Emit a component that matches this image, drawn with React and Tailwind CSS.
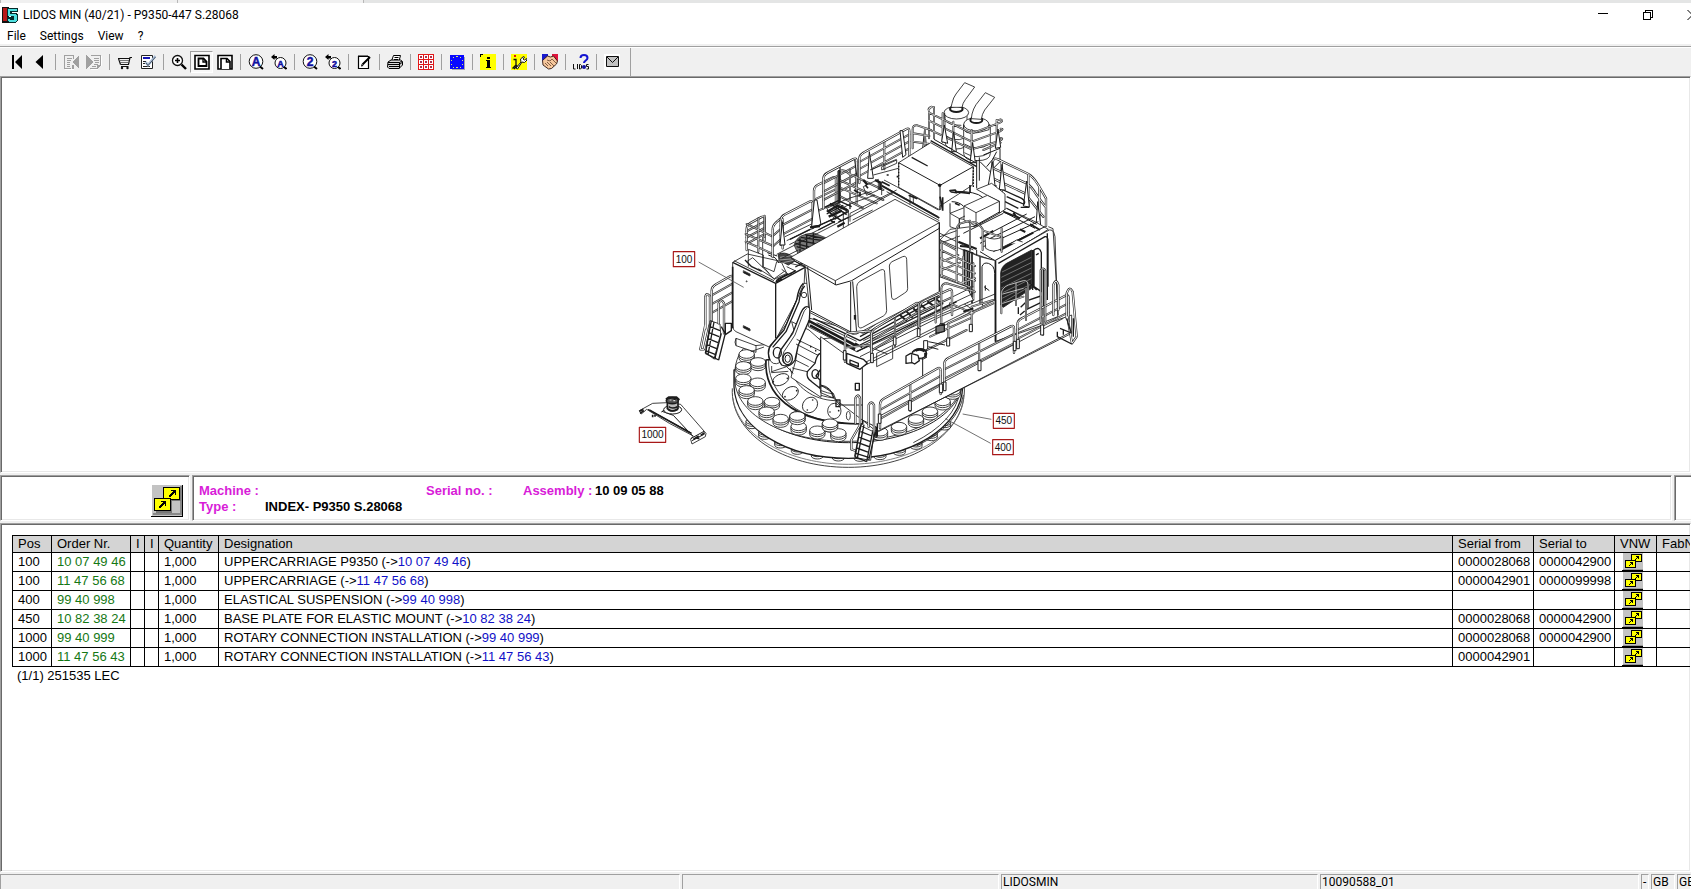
import React from 'react';

const ROWS = [
    { pos: '100', order: '10 07 49 46', qty: '1,000', name: 'UPPERCARRIAGE P9350', from: '0000028068', to: '0000042900' },
    { pos: '100', order: '11 47 56 68', qty: '1,000', name: 'UPPERCARRIAGE', from: '0000042901', to: '0000099998' },
    { pos: '400', order: '99 40 998', qty: '1,000', name: 'ELASTICAL SUSPENSION', from: '', to: '' },
    { pos: '450', order: '10 82 38 24', qty: '1,000', name: 'BASE PLATE FOR ELASTIC MOUNT', from: '0000028068', to: '0000042900' },
    { pos: '1000', order: '99 40 999', qty: '1,000', name: 'ROTARY CONNECTION INSTALLATION', from: '0000028068', to: '0000042900' },
    { pos: '1000', order: '11 47 56 43', qty: '1,000', name: 'ROTARY CONNECTION INSTALLATION', from: '0000042901', to: '' },
];

const FRAME = 'border border-t-[#a0a0a0] border-l-[#a0a0a0] border-r-white border-b-white bg-white shadow-[inset_1px_1px_0_#696969,inset_-1px_-1px_0_#e8e8e8]';

/* ---------- toolbar icons, all on a 16 x 16 grid ---------- */

function Icon({ children, crisp = true }) {
    return (
        <svg width="16" height="16" viewBox="0 0 16 16" fill="none" stroke="none" shapeRendering={crisp ? 'crispEdges' : 'auto'} aria-hidden="true">
            {children}
        </svg>
    );
}

const FirstIcon = () => (
    <Icon crisp={false}>
        <path d="M3 1h2v14H3zM13 1v14L6 8z" fill="#000" />
    </Icon>
);

const PrevIcon = () => (
    <Icon crisp={false}>
        <path d="M11 1v14L3.500 8z" fill="#000" />
    </Icon>
);

const SheetPrevIcon = () => (
    <Icon>
        <path d="M1 1h10v1H2v12h6v1H1zM4 4h5v1H4zM4 6h4v1H4zM4 8h3v1H4zM4 10h3v1H4zM4 12h3v1H4z" fill="#a0a0a0" />
        <path d="M16 1v14l-7-7zM10 2h1v3h-1zM9 11h2v4H9z" fill="#a0a0a0" />
        <path d="M2 15h9v1H2z" fill="#fff" />
    </Icon>
);

const SheetNextIcon = () => (
    <Icon>
        <path d="M0 1l7 7-7 7zM5 1h10v10h-1V2H5zM4 14h7v1H4zM11 11h4v1h-1v1h-1v1h-1v1h-1z" fill="#a0a0a0" />
        <path d="M8 4h5v1H8zM8 6h5v1H8zM9 8h4v1H9zM8 10h4v1H8zM6 12h4v1H6z" fill="#a0a0a0" />
        <path d="M15 2h1v10h-1zM5 15h7v1H5z" fill="#fff" />
    </Icon>
);

const CartIcon = () => (
    <Icon crisp={false}>
        <path d="M1 4.500h11.500M15 3.500h-2L11.500 10.500H3.500M1.500 4.500l2 6" stroke="#111" strokeWidth="1.200" />
        <path d="M2 6.500h10M3 8.500h9" stroke="#555" strokeWidth="0.800" />
        <path d="M4 12.500h7.500" stroke="#111" />
        <circle cx="5" cy="14" r="1.200" fill="#111" />
        <circle cx="10.500" cy="14" r="1.200" fill="#111" />
    </Icon>
);

const ChecklistIcon = () => (
    <Icon crisp={false}>
        <path d="M1.500 1.500h11v13h-11z" fill="#fff" stroke="#222" />
        <path d="M3 3h7v2H3z" fill="#1414b4" />
        <path d="M3 7.500h3M3 9.500h2M3 12.500h7" stroke="#222" />
        <path d="M5.500 8l2.500 3L15.500 2" stroke="#a9bcd4" strokeWidth="2.500" />
        <path d="M6 9l2 2.500L15.500 3" stroke="#456" strokeWidth="1" />
    </Icon>
);

const ZoomInIcon = () => (
    <Icon crisp={false}>
        <circle cx="6.500" cy="6.500" r="5" fill="#fff" stroke="#111" strokeWidth="1.300" />
        <path d="M4 6.500h5M6.500 4v5" stroke="#000" strokeWidth="1.600" />
        <path d="M10.500 10.500L15 15" stroke="#000" strokeWidth="2.400" />
    </Icon>
);

const PageFitIcon = () => (
    <Icon crisp={false}>
        <path d="M1 1.500h14v13.500H1z" fill="#fff" stroke="#000" strokeWidth="1.600" />
        <path d="M4.500 4.500h5l3 3V12h-8z" fill="#fff" stroke="#000" strokeWidth="1.800" />
        <path d="M9 4v4h4" stroke="#000" strokeWidth="1.300" />
    </Icon>
);

const PageWidthIcon = () => (
    <Icon crisp={false}>
        <path d="M1 1.500h14v13.500H1z" fill="#fff" stroke="#000" strokeWidth="1.600" />
        <path d="M4 15V4.500h6l3 3V15" fill="#fff" stroke="#000" strokeWidth="1.600" />
        <path d="M9.500 4v4H13" stroke="#000" strokeWidth="1.500" />
    </Icon>
);

function SearchGlyph({ glyph, left }) {
    return (
        <Icon crisp={false}>
            <circle cx={left ? 9.5 : 8} cy={left ? 9 : 7.5} r={left ? 5.5 : 6.8} fill="#fff" stroke="#111" />
            <path d={left ? 'M13 13l2.500 2' : 'M12 12.500l3 2.500'} stroke="#000" strokeWidth="2" />
            {left && <path d="M0 3l3.500-3v2H6v2.500H3.500V6z" fill="#000" />}
            <text
                x={left ? 9.5 : 8}
                y={left ? 12.5 : 12}
                textAnchor="middle"
                fontFamily="Liberation Sans, sans-serif"
                fontWeight="700"
                fontSize={left ? 9 : 12}
                fill="#1010a0"
                stroke="#1010a0"
                strokeWidth="0.500"
            >
                {glyph}
            </text>
        </Icon>
    );
}

const NoteIcon = () => (
    <Icon crisp={false}>
        <path d="M2.500 2.500h10v12h-10z" fill="#fff" stroke="#000" strokeWidth="1.200" />
        <path d="M3 1v2M5 1v2M7 1v2M9 1v2M11 1v2" stroke="#000" />
        <path d="M14 3L6.500 10.500" stroke="#000" strokeWidth="2" />
        <path d="M5 12.500l.5-2.500 2 2z" fill="#000" />
    </Icon>
);

const PrinterIcon = () => (
    <Icon crisp={false}>
        <path d="M4.500 7L6.500 1.500h7L12 7" fill="#fff" stroke="#000" />
        <path d="M7.500 3.500h4M7 5.500h4" stroke="#000" />
        <path d="M1 8l3-2h9.500l2 1.500V11l-3.500 3.500H2L.5 13z" fill="#d8d8d8" stroke="#000" />
        <path d="M1 8.500h11.500L15 7M1 10.500h11.500L15 8.500M2 12.500h10" stroke="#000" />
        <path d="M12.500 8.500v6" stroke="#000" />
    </Icon>
);

const GridIcon = () => (
    <Icon>
        <path d="M0 0h16v16H0z" fill="#e41818" />
        {[1, 6, 11].map(x => [1, 6, 11].map(y => (
            <g key={`${x}-${y}`}>
                <rect x={x} y={y} width="4" height="4" fill="#fff" />
                <rect x={x + 1} y={y + 1} width="2" height="2" fill="#a83050" />
            </g>
        )))}
    </Icon>
);

const StarsIcon = () => (
    <Icon>
        <path d="M3 3h13v13H3z" fill="#a8a8a8" />
        <path d="M1 1h14v14H1z" fill="#0808ff" />
        <path d="M7 2h2v1H7zM4 3h1v1H4zM11 3h1v1h-1zM2 6h1v1H2zM13 6h1v1h-1zM2 10h1v1H2zM13 10h1v1h-1zM4 13h1v1H4zM11 13h1v1h-1zM7 13h2v1H7z" fill="#d8e86c" />
    </Icon>
);

const InfoIcon = () => (
    <Icon>
        <path d="M0 0h16v16H0z" fill="#ff0" />
        <path d="M0 0h3v1H1v2H0z" fill="#000" />
        <path d="M7 3h3v2H7zM6 6h4v7h1v1H6v-1h1V7H6z" fill="#000" />
    </Icon>
);

const WrenchIcon = () => (
    <Icon crisp={false}>
        <path d="M0 0h16v16H0z" fill="#ff0" />
        <path d="M3 1h2v2H3z" fill="#e01010" />
        <path d="M2.500 5.500H5V11M1.500 14.500L5 11l1 1-3 3" stroke="#111" strokeWidth="1.300" />
        <path d="M5 14l5-6-.5-3 3-2.500 1 .5-1.500 2 1.500 1 2-1.500.5 1.500-2.500 2.500-2.500-.5-4.500 7z" fill="#fff" stroke="#111" />
    </Icon>
);

const HandshakeIcon = () => (
    <Icon crisp={false}>
        <path d="M0 0h6v3L2 7H0z" fill="#1a1acc" />
        <path d="M10 0h6v7h-2l-4-4z" fill="#e0143c" />
        <path d="M.5 6.500l5-4.500 3 1 3-1 4 5-1 3-5 4.500-3 .5L1 11z" fill="#f6c79c" stroke="#301810" strokeWidth="0.900" />
        <path d="M5 6l3 1 2-2 4 4M3 9l3 3M5 8l4 4M8 8l4 4" stroke="#503020" strokeWidth="0.700" />
    </Icon>
);

const LidosHelpIcon = () => (
    <Icon crisp={false}>
        <path d="M7.500 4c0-4 7-4 7 0 0 2.500-3.500 2.500-3.500 5" stroke="#1414d0" strokeWidth="2" />
        <circle cx="11" cy="13" r="2" fill="#1010a0" />
        <path d="M.5 10v5h2M4.500 10v5M6.500 10.500h1l1 1v2.500l-1 1h-1zM15.500 10.500h-2v2h2v2.500h-2" stroke="#111" />
    </Icon>
);

const MailIcon = () => (
    <Icon crisp={false}>
        <path d="M0 0h16v16H0z" fill="#fff" />
        <path d="M2.500 2.500h12v10h-12z" fill="#c4c4c4" stroke="#111" />
        <path d="M3 3l5.500 5.500L14 3" stroke="#111" />
    </Icon>
);

const TOOL_GROUPS = [
    [['First page', <FirstIcon />], ['Previous page', <PrevIcon />]],
    [['Previous sheet', <SheetPrevIcon />], ['Next sheet', <SheetNextIcon />]],
    [['Cart', <CartIcon />], ['Order list', <ChecklistIcon />]],
    [['Zoom in', <ZoomInIcon />], ['Fit page', <PageFitIcon />, true], ['Fit width', <PageWidthIcon />]],
    [['Search text', <SearchGlyph glyph="A" />], ['Search text back', <SearchGlyph glyph="A" left />]],
    [['Search number', <SearchGlyph glyph="2" />], ['Search number back', <SearchGlyph glyph="2" left />]],
    [['Notes', <NoteIcon />]],
    [['Print', <PrinterIcon />]],
    [['Grid', <GridIcon />]],
    [['Region', <StarsIcon />]],
    [['Info', <InfoIcon />]],
    [['Service', <WrenchIcon />]],
    [['Partners', <HandshakeIcon />]],
    [['Help', <LidosHelpIcon />]],
    [['Mail', <MailIcon />]],
];

function Toolbar() {
    return (
        <div className="mt-[2px] border-t border-[#a0a0a0]">
            <div className="flex h-[29px] border-t border-white">
                <div className="flex items-center border-r border-[#a0a0a0] pr-[7px] pl-[5px]">
                    {TOOL_GROUPS.map((group, i) => (
                        <React.Fragment key={i}>
                            {i > 0 && (
                                <div className="flex w-2 justify-center">
                                    <span className="h-4 w-px bg-[#a0a0a0]" />
                                </div>
                            )}
                            {group.map(([label, icon, pressed]) => (
                                <button
                                    key={label}
                                    type="button"
                                    aria-label={label}
                                    className={`flex h-[22px] w-[23px] items-center justify-center border ${
                                        pressed ? 'border-t-[#a0a0a0] border-r-white border-b-white border-l-[#a0a0a0] bg-[#f8f8f8]' : 'border-transparent'
                                    }`}
                                >
                                    {icon}
                                </button>
                            ))}
                        </React.Fragment>
                    ))}
                </div>
            </div>
        </div>
    );
}

/* ---------- linked pages symbol ---------- */

function LinkButton() {
    return (
        <button type="button" aria-label="Where used" className="block">
            <svg width="32" height="32" viewBox="0 0 32 32" shapeRendering="crispEdges" aria-hidden="true">
                <path d="M1 0h31v31H1z" fill="#c3c3c3" />
                <path d="M29 1h2v29h-2zM2 28h29v2H2z" fill="#888" />
                <path d="M31 0h1v32H0v-1h31z" fill="#000" />
                <path d="M14 3h16v13H21v12H5V15h9z" fill="#777" />
                <path d="M12 2h17v13H12z" fill="#000" />
                <path d="M13 3h15v11H13z" fill="#ff0" />
                <path d="M3 13h17v13H3z" fill="#000" />
                <path d="M4 14h15v11H4z" fill="#ff0" />
                <path d="M20 5h5v5h-1V8h-1v1h-1v1h-1v1h-1v1h-2v-2h1V9h1V8h1V7h1V6h-2zM10 16h5v5h-1v-2h-1v1h-1v1h-1v1h-1v1H8v-2h1v-1h1v-1h1v-1h1v-1h-2z" fill="#000" />
            </svg>
        </button>
    );
}

function SmallLinkButton() {
    return (
        <button type="button" aria-label="Where used" className="block">
            <svg width="21" height="18" viewBox="0 0 21 18" shapeRendering="crispEdges" aria-hidden="true">
                <path d="M1 0h20v18H1z" fill="#c3c3c3" />
                <path d="M1 16h20v1H1z" fill="#999" />
                <path d="M0 17h21v1H0z" fill="#000" />
                <path d="M9 1h11v8H9z" fill="#000" />
                <path d="M10 2h9v6h-9z" fill="#ff0" />
                <path d="M3 7h11v8H3z" fill="#000" />
                <path d="M4 8h9v6H4z" fill="#ff0" />
                <path d="M14 3h3v3h-1V5h-1v1h-1v1h-1V6h1V5h1V4h-1zM8 9h3v3h-1v-1H9v1H8v1H7v-1h1v-1h1v-1H8z" fill="#000" />
            </svg>
        </button>
    );
}

/* ---------- exploded drawing ---------- */

// Hollow pipe: dark outline with a light core
function Tube({ d, w = 7 }) {
    return (
        <g fill="none" strokeLinejoin="round" strokeLinecap="round">
            <path d={d} stroke="#2c2c2c" strokeWidth={w} />
            <path d={d} stroke="#fff" strokeWidth={w - 4} />
        </g>
    );
}

// Straight guard rail: two corner posts, equally spaced bars and inner posts
function Rail({ x1, y1, x2, y2, h, posts = 1, bars = 2 }) {
    const parts = [];
    for (let i = 1; i <= bars; i++) {
        const off = (h * i) / (bars + 1);
        parts.push(`M${x1} ${y1 + off}L${x2} ${y2 + off}`);
    }
    for (let i = 1; i <= posts; i++) {
        const t = i / (posts + 1);
        const x = x1 + (x2 - x1) * t;
        const y = y1 + (y2 - y1) * t;
        parts.push(`M${x} ${y}V${y + h}`);
    }
    const s = x2 > x1 ? 1 : -1;
    const k = (y2 - y1) / (x2 - x1);
    const outline = `M${x1} ${y1 + h}V${y1 + 12}Q${x1} ${y1} ${x1 + 12 * s} ${y1 + 12 * s * k}L${x2 - 10 * s} ${y2 - 10 * s * k}Q${x2} ${y2} ${x2} ${y2 + 12}V${y2 + h}`;
    return (
        <>
            <Tube d={parts.join('')} w={6} />
            <Tube d={outline} />
        </>
    );
}

function Pad({ x, y, rx = 23, ry = 13 }) {
    return (
        <g fill="#fff">
            <path d={`M${x - rx} ${y}v13a${rx} ${ry} 0 0 0 ${rx * 2} 0v-13`} />
            <path d={`M${x - rx} ${y + 6}a${rx} ${ry} 0 0 0 ${rx * 2} 0`} />
            <ellipse cx={x} cy={y} rx={rx} ry={ry} />
        </g>
    );
}

function Callout({ x, y, w, children }) {
    return (
        <g>
            <rect x={x} y={y} width={w} height="45" fill="#fff" stroke="#a81818" strokeWidth="3.500" />
            <text x={x + w / 2} y={y + 33} textAnchor="middle" fontFamily="Liberation Sans, sans-serif" fontSize="30" fill="#111" stroke="none">
                {children}
            </text>
        </g>
    );
}

const PADS = [
    [350, 852], [384, 876], [340, 888], [340, 925], [383, 937], [350, 960], [376, 993], [426, 995], [410, 1024],
    [452, 1046], [502, 1038], [506, 1069], [562, 1081], [600, 1060], [625, 1089], [750, 1085], [807, 1070],
    [858, 1047], [900, 1024], [938, 994], [968, 962],
];
const LOWER_PADS = [[366, 1054], [404, 1086], [452, 1112], [502, 1131], [562, 1145], [625, 1151], [690, 1152], [750, 1147], [808, 1134], [858, 1116], [904, 1090], [944, 1058]];

function MachineDrawing() {
    return (
        <svg
            width="480"
            height="393"
            viewBox="0 24 1440 1179"
            fill="none"
            stroke="#1c1c1c"
            strokeWidth="2.500"
            strokeLinejoin="round"
            className="shrink-0"
            role="img"
            aria-label="Uppercarriage"
        >
            {/* base plate and suspension ring */}
            <path d="M307 955C300 1090 460 1192 655 1192S1010 1090 1003 950" fill="#fff" />
            <path d="M309 985C325 1100 480 1183 655 1183S990 1100 1001 985" stroke="#666" />
            {LOWER_PADS.map(([x, y]) => <Pad key={x} x={x} y={y} rx={18} ry={9} />)}
            <path d="M312 920V950C318 1075 470 1165 655 1165S995 1075 998 950V900H312z" fill="#fff" strokeWidth="4" />
            <path d="M314 920C320 1040 480 1118 655 1118S985 1045 998 940" strokeWidth="3" />
            <path d="M990 965Q975 1055 850 1118M1000 975Q985 1065 860 1128" />
            <path d="M314 930C312 880 325 850 345 830L640 800 996 940C985 1030 840 1112 657 1114S320 1040 314 930z" fill="#fff" />
            {PADS.map(([x, y]) => <Pad key={`${x}-${y}`} x={x} y={y} />)}
            <path d="M408 870C402 960 470 1062 698 1062L700 900 560 850z" fill="#fff" strokeWidth="5" />
            <path d="M416 870C412 950 480 1050 640 1058" />
            {/* these two stand on the inner edge */}
            <Pad x={502} y={1038} />
            <Pad x={600} y={1060} />
            <g>
                <ellipse cx="452" cy="929" rx="26" ry="16" transform="rotate(-25 452 929)" />
                <ellipse cx="481" cy="970" rx="26" ry="18" transform="rotate(-32 481 970)" />
                <ellipse cx="540" cy="1005" rx="25" ry="21" transform="rotate(-50 540 1005)" />
                <ellipse cx="613" cy="1023" rx="20" ry="23" />
                <ellipse cx="655" cy="1037" rx="6" ry="13" />
            </g>
            <path d="M480 895C495 950 550 990 615 992M488 892C503 943 553 980 615 984M500 890C515 930 560 966 612 972M512 905l20 30M560 962l8 8" />
            <g fill="#222" stroke="none">
                <circle cx="430" cy="935" r="2.500" /><circle cx="472" cy="925" r="2.500" /><circle cx="500" cy="962" r="2.500" />
                <circle cx="465" cy="980" r="2.500" /><circle cx="532" cy="1020" r="2.500" /><circle cx="548" cy="990" r="2.500" />
                <circle cx="600" cy="1026" r="2.500" /><circle cx="626" cy="1022" r="2.500" />
            </g>

            {/* left access ladder */}
            <Rail x1={245} y1={650} x2={309} y2={614} h={105} posts={0} bars={3} />
            <Tube d="M226 775V680Q230 665 240 680V760L222 838H211L226 765" />
            <path d="M240 752l30 10 2 30-20 75-24-18z" fill="#fff" />
            <Tube d="M266 760V700Q274 684 282 700V790" />
            <path d="M240 770l30 12M237 788l30 12M234 806l30 12M230 824l30 12M227 842l30 12M244 752l-18 98M252 756l-18 98M286 790l-20 80M274 790l-20 78M226 850l40 20M274 770l12 22M286 760h18v22l-18 12z" strokeWidth="4" />
            <path d="M318 805l60 22v20l-60-20zM318 805q-6 12 0 22M362 845l40-14" fill="#fff" />

            {/* counter block, part 100 */}
            <path d="M308 577L352 552 525 590 522 650 437 810 428 836 318 785Q308 780 308 768z" fill="#fff" />
            <path d="M308 577L437 640V805M437 640L525 592" strokeWidth="4" />
            <path d="M312 572L432 632M340 602l20 10v6l-20-10zM340 767l20 10v6l-20-10z" />
            <path d="M341 606l18 9M341 770l18 9M437 636l20-9M308 590V775" strokeWidth="5" />
            <circle cx="350" cy="634" r="1.500" />
            <path d="M355 590V538L400 555V590L432 628 470 610 455 578 440 575 432 605 398 590M350 575l18-12 50 48M385 596l48 30 30-22M398 500v92M385 475v75M455 598l22 16M470 590l25 12-20 16" />
            <path d="M345 570l20 20 30 14M438 632l60-30M442 628l30-16M500 565l22 12-26 14" strokeWidth="4" />
            <path d="M412 548l30 10M415 555l20 8 12 16" strokeWidth="3" />

            {/* rear left guard rails */}
            <Rail x1={350} y1={465} x2={404} y2={436} h={75} posts={0} bars={3} />
            <Tube d="M350 462L428 500M347 492L430 528M347 515L425 550M385 445V545M404 437V500" w={6} />
            <Rail x1={428} y1={466} x2={458} y2={440} h={95} posts={0} bars={2} />
            <Rail x1={452} y1={440} x2={548} y2={390} h={84} posts={0} bars={2} />
            <Rail x1={552} y1={350} x2={618} y2={318} h={118} posts={0} bars={2} />
            <Rail x1={580} y1={315} x2={680} y2={262} h={100} posts={1} bars={3} />
            <Rail x1={688} y1={255} x2={838} y2={172} h={84} posts={1} bars={3} />
            <path d="M545 470l8-80h8l12 75zM450 525l7-70 8 70zM682 330l-8-60M713 325l5-80 12 80zM818 262l-8-80h8l10 72zM878 235l6-60 6 62z" fill="#fff" strokeWidth="3" />
            <Tube d="M625 410V305Q640 295 655 310L760 360M660 415V300M628 330L760 390M628 352L740 400M628 378l70 36M680 400V320" w={6} />
            <path d="M470 512L560 470 625 440M478 524L600 462M465 500L545 462M600 408l60-24 65-20M605 430l60-30 70-25M590 415l35-15 30 20-40 28zM640 425v50M655 420v50M700 350l45-22v32l-35 16zM720 300l80-32M730 315l75-20M755 290l45-20v10l-45 20z" />
            <path d="M592 425l30-18 30 14M596 440l40-18M540 472l30-4M700 330l12 14M622 470l22-12M628 300v100M735 330l16 8v22" strokeWidth="7" />
            <path d="M585 412l40-20 40 18M590 432l50-26M610 448l46-24M625 456l30-14M600 400l50 34M590 422l44 30M480 508l60-30M560 470l60-28M565 480l50-26" strokeWidth="4" />
            <path d="M770 315h6M800 320h6M690 365v14M600 450l14 8M672 360l14 8M706 345l8 10" strokeWidth="5" />
            {/* fan grilles */}
            <path d="M492 525q8-34 60-36l35 14-45 30-38 18z" fill="#777" strokeWidth="2" />
            <path d="M496 520l60 16M502 510l68 14M512 502l68 10M525 494l60 12M500 530l40 12M510 545V505M530 538v-44M550 530v-40" strokeWidth="4" />
            <path d="M445 553q18-10 42 6l8 14-20 12-28-14z" fill="#444" />
            <path d="M450 562l40-6M448 570l44-4M460 578l34-8" stroke="#ccc" strokeWidth="2" />
            <path d="M440 553L660 440 790 368M455 565L505 540M660 430l140-70M668 450l60-30M660 430v25" />

            {/* filters and rear deck */}
            <path d="M945 130v85q0 22 33 22t33-22v-85z" fill="#fff" />
            <path d="M1001 165v85q0 22 40 22t40-22v-85z" fill="#fff" />
            <ellipse cx="979" cy="128" rx="37" ry="19" fill="#fff" />
            <ellipse cx="979" cy="117" rx="19" ry="9" fill="#fff" strokeWidth="6" />
            <ellipse cx="1039" cy="163" rx="38" ry="20" fill="#fff" />
            <ellipse cx="1039" cy="150" rx="18" ry="9" fill="#fff" strokeWidth="6" />
            <path d="M963 112l3-12q4-18 12-28l26-34 30 13-28 38q-8 10-10 23z" fill="#fff" />
            <path d="M1024 146l2-14q4-16 12-28l28-36 28 14-30 38q-8 12-10 28z" fill="#fff" />
            <path d="M944 128v18q6 20 50 20M1001 163v16q10 22 76 0v-16M945 195q30 22 56 10M1003 222q38 24 76 0M1003 248q38 24 76 0" />
            <Tube d="M897 205V125Q895 108 912 112V205M897 122Q892 115 905 110M897 128L1025 190L1110 158Q1122 152 1112 148L1100 152M897 152L1025 215L1110 184Q1124 176 1112 176M897 178L1025 238L1110 212Q1122 205 1112 204M1025 180V275M970 155V240M1100 150V232M938 130V215M1060 240l52-22" w={6} />
            <path d="M935 215l8-50 10 55zM965 245l6-60 8 60zM1020 278l8-60 8 60zM1096 235l8-58 8 55z" fill="#fff" strokeWidth="3" />
            <Tube d="M848 235V178Q848 164 862 166L902 180M850 190l48 8M850 215l45 6M885 175v60" w={6} />

            {/* service box on the deck */}
            <path d="M806 278L902 218 1030 290 1028 345 930 408V420L806 352z" fill="#fff" />
            <path d="M806 278L930 346 1030 290M930 346V420" strokeWidth="3" />
            <path d="M845 262l48 26M902 212L1040 290" strokeWidth="4" />
            <path d="M912 208L1040 280M1040 270V355M1048 262v70M1060 255l50-20v40l-30 30-30-30M1070 290q20-20 30-45" strokeWidth="3" />
            <circle cx="929" cy="346" r="4" fill="#111" />
            <path d="M806 278v72M1030 292v60" strokeDasharray="5 4" strokeWidth="4" />

            {/* right rear guard rail */}
            <Tube d="M1088 345V275Q1090 262 1104 268L1195 312Q1210 320 1225 345L1248 385V468M1090 295L1190 340Q1205 350 1218 372L1246 410M1088 325L1185 370L1240 440M1115 275V370M1195 315V405M1228 350V465" w={7} />
            <path d="M1075 345l12-70 8 72zM1108 358l8-75 10 78zM1180 408l10-75 8 78zM1218 470l5-75 10 78z" fill="#fff" strokeWidth="3" />
            <path d="M1070 348h30M1172 412h26M1130 380l50 22M1125 395l40 20M1120 360l55 25q15 10 5 20" strokeWidth="4" />

            {/* equipment boxes */}
            <path d="M1040 358L1085 340 1125 372V420L1108 430V394L1072 376z" fill="#fff" />
            <path d="M960 430L1015 408V450L988 446V480L960 470z" fill="#fff" />
            <path d="M1002 408L1072 376 1108 394V432L1038 468 1002 450z" fill="#fff" />
            <path d="M1002 408L1038 428 1108 394M1038 428V468M960 430L988 446 1005 438M988 446V480" />
            <path d="M978 364q60 0 80 18M965 395q22 0 36 14M960 430V400" strokeWidth="3" />
            <path d="M960 362l16-2 4 8-16-2zM980 366l40 4M1020 345v22M930 380l8 40M938 382v40M975 400l14 6" strokeWidth="5" />
            <path d="M755 345L925 440M762 330L800 350 925 420M770 365L928 452M755 335v40M840 375v28M850 378v24" />
            <path d="M755 335l24 12M836 376l26 10M756 348L928 444" strokeWidth="5" />

            {/* deck behind the engine house */}
            <path d="M960 478L1038 468 1108 430 1130 415 1215 455 1255 478 1100 575 1000 540 930 510z" fill="#fff" />
            <path d="M1050 520L1215 440M1060 530L1225 455M1090 545L1245 470M1060 500L1190 432M1130 415l90 48M1000 490l120-60M1050 545L1095 572 1250 484M1040 540v30M1030 470l80-45M1120 425l95 50" strokeWidth="3" />
            <path d="M1120 425l30 12M1150 435l20 10M985 515l55 22M1110 540l100-52M1050 505l40-22M1200 462l30 18M1000 540l30 10M990 528l40 4M1150 428l10 14M1170 478l16 8" strokeWidth="6" />
            <path d="M1065 500l2 35q22 16 50 0l2-35q-26 14-54 0zM1140 522l20-12 18 6" fill="#fff" />
            <Tube d="M980 540V475Q984 460 998 458L1020 452M1020 540V460Q1040 448 1058 478V540M1115 475V545M1060 482L1110 500" w={6} />

            {/* engine house on the right */}
            <path d="M1000 540L1050 560 1097 572 1100 815 1030 720 1000 700z" fill="#fff" />
            <path d="M1095 572L1250 484Q1270 470 1275 500L1283 740 1097 815z" fill="#fff" />
            <path d="M1097 572V812M1252 490V690M1050 560V700M1105 580L1245 500Q1254 498 1254 515V650" strokeWidth="4" />
            <path d="M1004 540V690M1012 545V700M1018 548V690M1026 550V700" strokeWidth="5" />
            <path d="M1056 700V590Q1060 576 1075 580Q1094 586 1094 610V690Q1090 712 1075 714 1060 716 1056 700z" fill="#fff" strokeWidth="3" />
            <path d="M1062 650l16 12M1066 646v16" strokeWidth="3" />
            <path d="M1112 705V608Q1114 590 1130 580L1205 540V655L1120 712z" fill="#222" />
            <path d="M1116 606L1204 562M1114 622L1204 578M1114 638L1204 594M1114 654L1204 610M1114 670L1204 626M1114 686L1204 642M1114 700L1190 655" stroke="#999" strokeWidth="2" />
            <path d="M1212 540Q1228 528 1234 548V665L1212 650zM1208 540V660M1240 600v110M1218 555l8-5M1172 712l20-20 40-14v20l-42 20M1165 712v20M1200 640l20 20M1170 735l14-12" strokeWidth="4" />
            <path d="M1255 470l14 6 16 260" />

            {/* stair tower between cab and house */}
            <path d="M930 500l50-18M930 520l60-22M930 490l100 50" />
            <Tube d="M935 520V640M980 500V650M932 515L980 540M932 540L1035 588M932 565L1035 610M932 590L1035 632M932 615L1030 655M1000 640V560M940 640L1030 685M1030 580V690M935 575L985 555M935 600L990 578M960 650L1035 625" w={6} />

            {/* lift arms */}
            <path d="M522 640L500 690 470 760 418 835Q410 870 430 880 450 886 460 862L485 790 535 735V640z" fill="#fff" />
            <path d="M520 640Q505 655 500 690L462 780 420 828Q410 850 420 870M524 648Q512 660 507 695L468 785 428 832" strokeWidth="4" />
            <path d="M485 755l52 25 36 32v170l-90-60 14-50 6-50z" fill="#fff" />
            <path d="M540 715Q525 700 512 730L488 790 452 840Q440 870 455 885 480 895 495 870L505 825 538 750z" fill="#fff" strokeWidth="4" />
            <path d="M530 715Q522 720 518 735L495 795 462 845Q452 868 462 880" />
            <ellipse cx="442" cy="848" rx="12" ry="16" strokeWidth="4" />
            <ellipse cx="473" cy="866" rx="14" ry="18" fill="#fff" strokeWidth="4" />
            <ellipse cx="473" cy="866" rx="8" ry="11" strokeWidth="3" />
            <circle cx="522" cy="675" r="8" />
            <path d="M500 808l70 34M498 822l74 38M500 850l60 32M425 905l45-15 20 20M425 888v20l50-4M490 895l50 12M496 870l40 20" />
            <path d="M570 850Q560 855 555 880L532 905Q528 925 545 935L570 955V930l-12-12 14-20" fill="#fff" strokeWidth="4" />
            <ellipse cx="556" cy="912" rx="10" ry="13" strokeWidth="4" />
            <path d="M508 815h4M540 830h4M555 842h4" strokeWidth="5" />

            {/* chassis side */}
            <path d="M572 800L697 890 1095 690V815L1325 735V790L740 1085 697 1050 618 990 610 970 572 945z" fill="#fff" />
            <path d="M697 892V1050M572 810V945Q605 950 612 985L630 1005H697M1097 690V815M697 1050L740 1072M878 850V925" strokeWidth="3" />
            <path d="M570 948q24 2 34 20l6 16-38-16z" />
            <path d="M676 940h12v20h-12zM618 990h12v20h-12z" strokeWidth="4" />
            <path d="M745 1040L1300 745M745 1085L1325 785" />
            <path d="M690 860L935 738 1095 672M740 850l48-24v40l-48 24zM700 880L1010 725" />

            {/* cab floor */}
            <path d="M540 745L535 770 680 845 1030 690 1010 650 928 620 700 790z" fill="#fff" />
            <path d="M535 752L680 828M540 766L675 838" strokeWidth="8" />
            <path d="M550 745L690 812 930 680M690 825L940 700M680 845L980 695M690 800L925 672" strokeWidth="4" />
            <path d="M560 758l120 56M700 812L1030 650M700 826L1030 670" />
            <path d="M810 735l20 18M830 725l18 18M850 715l16 16M870 702l20 18M892 694l20 14M910 682l20 14M675 820l22 12M895 690l30-14" strokeWidth="6" />
            <path d="M650 850L700 868 712 880 690 898 650 880zM660 870l25 10v10l-25-10z" fill="#fff" strokeWidth="4" />

            {/* cab */}
            <path d="M525 588L540 728 668 793 680 792 928 665V458L660 560z" fill="#fff" />
            <path d="M533 590L545 720M668 634L680 790M662 636V790M540 722L670 790M928 470V665" strokeWidth="3" />
            <path d="M482 562L795 388 928 458 616 632z" fill="#fff" />
            <path d="M482 562L495 574 618 645 665 632 928 475V458M616 632V645M495 574L525 588" strokeWidth="3" />
            <path d="M680 650Q680 640 690 634L752 600Q764 595 764 608L770 722Q770 732 760 738L698 772Q686 778 685 766z" />
            <path d="M778 588Q778 580 786 575L818 560Q829 556 830 568L833 656Q833 665 824 669L798 686Q787 692 785 682z" />
            <path d="M675 735v14" strokeWidth="7" />

            {/* walkway guard rails beside the cab */}
            <Rail x1={645} y1={790} x2={724} y2={782} h={85} posts={0} bars={1} />
            <Rail x1={724} y1={782} x2={866} y2={695} h={90} posts={1} bars={2} />
            <Rail x1={868} y1={700} x2={966} y2={655} h={80} posts={1} bars={2} />
            <Tube d="M795 810V745M866 770V700M934 770V655Q936 640 950 640L1035 665M960 700L1030 730M1025 780V710L1090 690M955 820V760L1090 700M900 800L1020 745M890 840L1010 780" w={6} />
            <path d="M790 825h8v-24h-8zM862 800h8v-24h-8zM930 785h8v-24h-8zM1018 785h9v-22h-9zM950 828h9v-24h-9zM640 870h8v-28h-8zM722 878h8v-28h-8z" fill="#fff" strokeWidth="3" />
            <path d="M918 770l25-8v22l-25 6z" fill="#777" strokeWidth="4" />
            <path d="M1000 725l30-10" strokeWidth="6" />

            {/* pump on the chassis */}
            <ellipse cx="868" cy="851" rx="22" ry="14" fill="#fff" strokeWidth="4" />
            <path d="M828 858l14-8 22 6 4 16-14 10-8-4-18 2z" fill="#fff" strokeWidth="4" />
            <path d="M845 853v24M850 846q20-18 40-4M868 866q12 4 22-4M888 838v26M881 838v-26h12v26M895 815l50 10M895 830l30 8" strokeWidth="3" />
            <path d="M856 842q16-8 28 2M886 848v14" strokeWidth="7" />

            {/* lower walkway rails */}
            <Rail x1={750} y1={992} x2={932} y2={890} h={82} posts={1} bars={2} />
            <Rail x1={943} y1={870} x2={1152} y2={764} h={84} posts={1} bars={2} />
            <Rail x1={1162} y1={752} x2={1316} y2={672} h={82} posts={1} bars={2} />
            <path d="M928 968h10v-26h-10zM940 962h8v-26h-8zM836 1022h8v-30h-8zM1044 902h9v-30h-9zM1150 842h8v-28h-8zM1160 836h8v-28h-8zM1232 795h9v-30h-9zM745 1060h8v-28h-8z" fill="#fff" strokeWidth="3" />
            <Tube d="M1114 730V668Q1118 652 1135 645L1180 632Q1194 630 1194 645V712M1118 672L1180 655M1158 705V640M1188 750V655M1118 700L1180 680M1232 755V600Q1240 590 1246 602V755" w={6} />
            <Tube d="M1270 735V645Q1278 622 1285 645V720M1310 745V670Q1318 645 1328 665L1340 800 1326 820 1312 740" />
            <path d="M1282 785V800L1325 822M1290 775l34 14M1310 745l12 40M1300 780v14M1330 745V800" strokeWidth="4" />

            {/* front ladder */}
            <path d="M690 1066l42 20-10 85-46-8z" fill="#fff" />
            <Tube d="M676 1060V985Q684 968 690 985V1065L664 1110V1138L676 1142M716 1070V1005Q724 990 732 1005V1090" />
            <path d="M694 1060l-20 100M702 1064l-20 100M728 1085l-18 90M736 1085l-20 86M674 1160l36 15M692 1085l34 13M688 1102l34 13M684 1118l36 13M680 1134l36 13M678 1150l38 12M738 1070v34M742 1060v40" strokeWidth="4" />

            {/* rotary connection, part 1000 */}
            <path d="M28 1022L68 1000 112 998 152 1003 160 1012 228 1090 226 1100 186 1122 182 1108 190 1098 118 1060 50 1018 34 1032z" fill="#fff" />
            <path d="M54 1018L186 1090M96 1024L130 1036 188 1098M94 1026l12-8M182 1106L222 1084M186 1112l38-20" strokeWidth="3" />
            <path d="M28 1024l12-6M30 1030l12-8M58 1020L180 1088M68 1034v8M75 1034v6M190 1108l16-10M212 1096l12-8M200 1104l8 2" strokeWidth="5" />
            <ellipse cx="128" cy="1019" rx="27" ry="13" fill="#fff" strokeWidth="3" />
            <path d="M112 994v22q14 14 32 0v-22" fill="#bbb" strokeWidth="5" />
            <path d="M116 1010q12 8 26 0M114 1018q14 10 30 0" strokeWidth="5" />
            <ellipse cx="127" cy="992" rx="18" ry="9" fill="#555" strokeWidth="5" />
            <path d="M108 988l8-6h24l8 8M120 980v12M134 980v12" strokeWidth="6" />
            <path d="M118 990h6M130 992h6" stroke="#fff" strokeWidth="3" />

            {/* leader lines and callouts */}
            <path d="M206 576L341 652M998 1032L1084 1048M946 1046L1082 1120" stroke="#555" />
            <Callout x={130} y={545} w={64}>100</Callout>
            <Callout x={28} y={1072} w={79}>1000</Callout>
            <Callout x={1090} y={1030} w={63}>450</Callout>
            <Callout x={1088} y={1109} w={62}>400</Callout>
        </svg>
    );
}

/* ---------- window ---------- */

function TitleBar() {
    return (
        <header className="overflow-hidden bg-white">
            <div className="flex h-[3px] bg-[#e4e5e5]">
                <div className="w-[178px] border-r border-l border-[#b8b8b8] bg-[#f0f0f0]" />
                <div className="w-[186px] border-r border-[#b8b8b8] bg-[#f0f0f0]" />
            </div>
            <div className="flex h-6 items-center">
                <svg width="16" height="16" viewBox="0 0 16 16" className="ml-[2px] shrink-0" shapeRendering="crispEdges" aria-hidden="true">
                    <path d="M0 0h7v11h3v5H0z" fill="#111" />
                    <path d="M1 1h4v13H1zM5 11h4v3H5z" fill="#b81818" />
                    <path d="M5 1h11v4H10v1h4l2 2v5l-3 3H7l-2-2v-4h4V9H5z" fill="#062c2c" />
                    <path d="M6 2h9v2H8v3h5l2 2v4l-2 2H7l-1-1v-2h2v1h4V9H6z" fill="#4fe0e0" />
                </svg>
                <h1 className="ml-[5px] grow text-xs font-normal whitespace-nowrap">LIDOS MIN (40/21) - P9350-447 S.28068</h1>
                <div className="-mr-6 flex shrink-0">
                    <button type="button" aria-label="Minimise" className="flex h-6 w-[45px] items-center justify-center">
                        <svg width="10" height="10" viewBox="0 0 10 10" shapeRendering="crispEdges"><path d="M0 3h10v1H0z" /></svg>
                    </button>
                    <button type="button" aria-label="Restore" className="flex h-6 w-[45px] items-center justify-center">
                        <svg width="10" height="10" viewBox="0 0 10 10" fill="none" stroke="#000" shapeRendering="crispEdges">
                            <path d="M.5 2.500h7v7h-7zM2.500 2.500v-2h7v7h-2" />
                        </svg>
                    </button>
                    <button type="button" aria-label="Close" className="flex h-6 w-[45px] items-center justify-center">
                        <svg width="11" height="10" viewBox="0 0 11 10" stroke="#000"><path d="M.5 0l10 10M10.500 0l-10 10" /></svg>
                    </button>
                </div>
            </div>
            <nav className="flex h-[17px] items-center gap-[14px] pl-[7px] text-xs">
                {['File', 'Settings', 'View', '?'].map(item => (
                    <button key={item} type="button" className="leading-4">{item}</button>
                ))}
            </nav>
        </header>
    );
}

function InfoRow() {
    return (
        <div className="flex gap-[2px]">
            <div className={`flex h-[46px] w-[190px] justify-end pt-[6px] pr-[6px] ${FRAME}`}>
                <LinkButton />
            </div>
            <div className={`h-[46px] grow px-[6px] pt-[7px] font-[Liberation_Sans,sans-serif] text-[13px] leading-4 font-bold ${FRAME}`}>
                <dl className="grid grid-cols-[66px_161px_97px_72px_auto] text-[#d81cd8]">
                    <dt>Machine :</dt>
                    <dd />
                    <dt>Serial no. :</dt>
                    <dt>Assembly :</dt>
                    <dd className="text-black">10 09 05 88</dd>
                    <dt>Type :</dt>
                    <dd className="whitespace-nowrap text-black">INDEX- P9350 S.28068</dd>
                </dl>
            </div>
            <div className={`-mr-1 h-[46px] w-[21px] ${FRAME}`} />
        </div>
    );
}

const TH = 'overflow-hidden border border-black px-[5px] text-left font-normal whitespace-nowrap';
const TD = 'overflow-hidden border border-black px-[5px] whitespace-nowrap';

function PartsTable() {
    return (
        <table className="w-[calc(100%+29px)] table-fixed border-collapse leading-4">
            <colgroup>
                <col className="w-[39px]" />
                <col className="w-[79px]" />
                <col className="w-[14px]" />
                <col className="w-[14px]" />
                <col className="w-[60px]" />
                <col />
                <col className="w-[81px]" />
                <col className="w-[81px]" />
                <col className="w-[42px]" />
                <col className="w-[62px]" />
            </colgroup>
            <thead>
                <tr className="h-[17px] bg-[#d4d4d4]">
                    <th className={TH}>Pos</th>
                    <th className={TH}>Order Nr.</th>
                    <th className={TH}>I</th>
                    <th className={TH}>I</th>
                    <th className={TH}>Quantity</th>
                    <th className={TH}>Designation</th>
                    <th className={TH}>Serial from</th>
                    <th className={TH}>Serial to</th>
                    <th className={TH}>VNW</th>
                    <th className={TH}>FabNr</th>
                </tr>
            </thead>
            <tbody>
                {ROWS.map(row => (
                    <tr key={row.order} className="h-[19px]">
                        <td className={TD}>{row.pos}</td>
                        <td className={`${TD} text-[#147814]`}>{row.order}</td>
                        <td className={TD} />
                        <td className={TD} />
                        <td className={TD}>{row.qty}</td>
                        <td className={TD}>
                            {row.name} (-&gt;<a href={`#${row.order.replaceAll(' ', '')}`} className="text-[#1010c8]">{row.order}</a>)
                        </td>
                        <td className={TD}>{row.from}</td>
                        <td className={TD}>{row.to}</td>
                        <td className="border border-black p-0 pl-[7px]"><SmallLinkButton /></td>
                        <td className={TD} />
                    </tr>
                ))}
            </tbody>
        </table>
    );
}

const STATUS_CELL = 'border-t border-l border-r border-t-[#a0a0a0] border-l-[#a0a0a0] border-r-white pl-px whitespace-nowrap';

function StatusBar() {
    return (
        <footer className="mt-[2px] grid h-[15px] shrink-0 grid-cols-[680fr_317fr_317fr_319fr_8px_24px_14px] gap-[2px] text-xs leading-[14px]">
            <div className={STATUS_CELL} />
            <div className={STATUS_CELL} />
            <div className={STATUS_CELL}>LIDOSMIN</div>
            <div className={STATUS_CELL}>10090588_01</div>
            <div className={STATUS_CELL}>-</div>
            <div className={STATUS_CELL}>GB</div>
            <div className={STATUS_CELL}>GB</div>
        </footer>
    );
}

export default function App() {
    return (
        <div className="flex h-screen flex-col overflow-hidden bg-[#f0f0f0] font-[Roboto,sans-serif] text-black">
            <TitleBar />
            <Toolbar />
            <section className={`mb-[2px] flex shrink-0 justify-center pt-px pb-px pl-[49px] ${FRAME}`}>
                <MachineDrawing />
            </section>
            <InfoRow />
            <main className={`mt-[2px] min-h-0 grow overflow-hidden pt-[11px] pl-[11px] font-[Liberation_Sans,sans-serif] text-[13px] ${FRAME}`}>
                <PartsTable />
                <p className="pl-[5px] leading-[18px]">(1/1) 251535 LEC</p>
            </main>
            <StatusBar />
        </div>
    );
}
